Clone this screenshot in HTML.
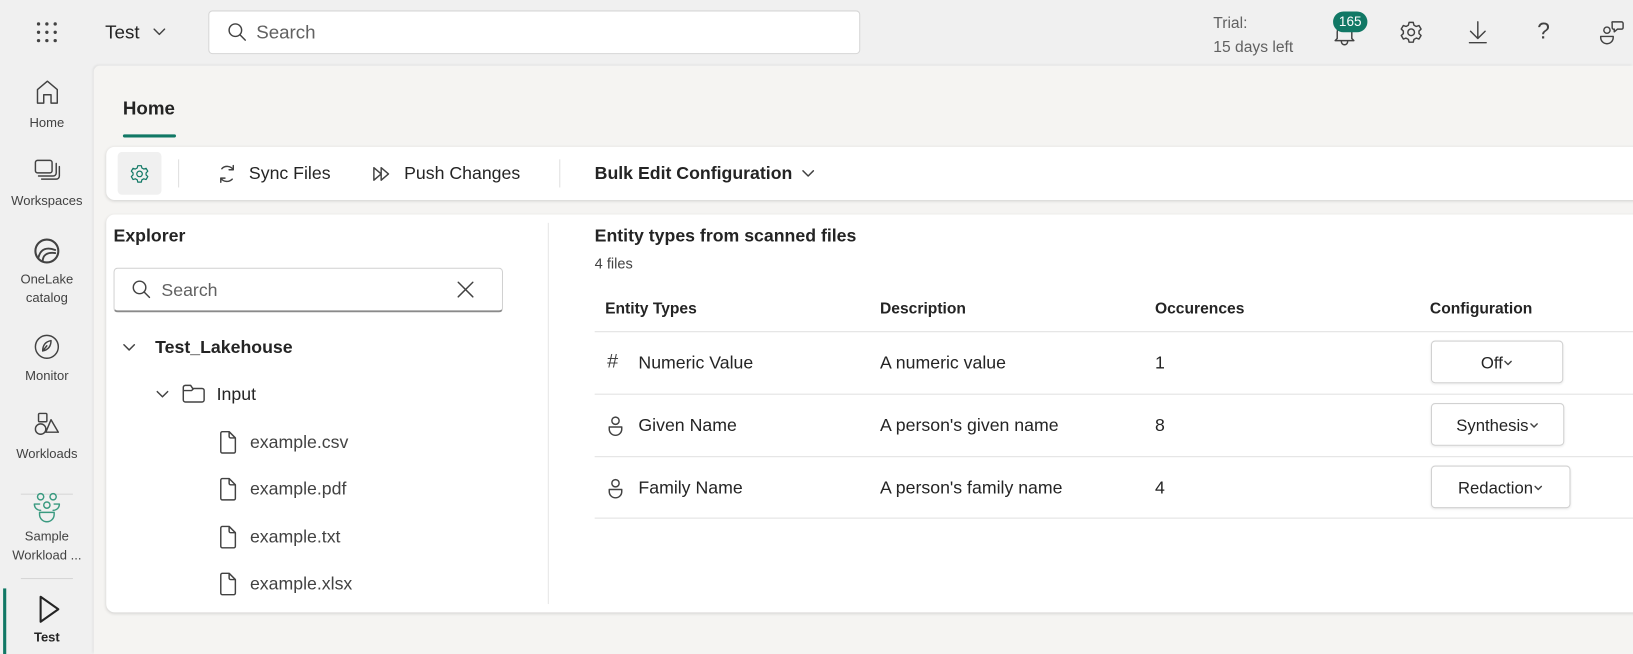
<!DOCTYPE html>
<html><head><meta charset="utf-8"><style>
*{box-sizing:border-box;margin:0;padding:0}
html,body{width:1633px;height:654px;overflow:hidden;background:#f0f0f0;font-family:"Liberation Sans",sans-serif;color:#242424}
#w{position:absolute;left:0;top:0;width:1568px;height:628px;transform:scale(1.04145);transform-origin:0 0;background:#f0f0f0}
.a{position:absolute;white-space:nowrap}
svg{position:absolute;fill:none;stroke:#424242;stroke-width:1.4;stroke-linecap:round;stroke-linejoin:round}
.nl{position:absolute;width:90px;text-align:center;font-size:12.5px;color:#424242;left:0;line-height:18px}
.b{font-weight:bold}
.hl{position:absolute;left:571px;width:997px;height:1px;background:#e1e1e1}
.btn{position:absolute;height:41px;border:1px solid #d1d1d1;border-radius:4px;background:#fff;font-size:16px;text-align:center;line-height:44px;box-shadow:0 1px 2px rgba(0,0,0,.08)}
.btn i{display:inline-block;width:10px;height:8px;position:relative;top:-1px}
.btn i svg{position:static}
</style></head><body><div id="w">
<svg style="left:34px;top:20px" width="22" height="22" viewBox="0 0 22 22"><g fill="#424242" stroke="none"><circle cx="3" cy="3" r="1.6"/><circle cx="11" cy="3" r="1.6"/><circle cx="19" cy="3" r="1.6"/><circle cx="3" cy="11" r="1.6"/><circle cx="11" cy="11" r="1.6"/><circle cx="19" cy="11" r="1.6"/><circle cx="3" cy="19" r="1.6"/><circle cx="11" cy="19" r="1.6"/><circle cx="19" cy="19" r="1.6"/></g></svg>
<div class="a" style="left:101px;top:21px;font-size:18px">Test</div>
<svg style="left:147px;top:27px" width="12" height="8" viewBox="0 0 12 8"><path d="M1 1l5 5 5-5"/></svg>
<div class="a" style="left:200px;top:10px;width:626px;height:42px;background:#fff;border:1px solid #d6d6d6;border-radius:4px"></div>
<svg style="left:218px;top:21px" width="20" height="20" viewBox="0 0 20 20"><circle cx="8" cy="8" r="6"/><path d="M12.5 12.5l5 5"/></svg>
<div class="a" style="left:246px;top:21px;font-size:18px;color:#616161">Search</div>
<div class="a" style="left:1165px;top:11px;font-size:15px;color:#616161;line-height:23px">Trial:<br>15 days left</div>
<svg style="left:1280px;top:22px" width="22" height="22" viewBox="0 0 22 22"><path d="M4 15V9a7 7 0 0114 0v6l2 2H2z M8 18a3 3 0 006 0"/></svg>
<div class="a" style="left:1280px;top:11px;width:33px;height:20px;border-radius:10px;background:#117865;color:#fff;font-size:13px;text-align:center;line-height:20px">165</div>
<svg style="left:1343px;top:19px" width="24" height="24" viewBox="0 0 24 24"><circle cx="12" cy="12" r="3.2"/><path d="M10 2.5h4l.7 2.7 2.2 1.2 2.6-.9 2 3.4-2 1.9v2.4l2 1.9-2 3.4-2.6-.9-2.2 1.2-.7 2.7h-4l-.7-2.7-2.2-1.2-2.6.9-2-3.4 2-1.9v-2.4l-2-1.9 2-3.4 2.6.9 2.2-1.2z"/></svg>
<svg style="left:1408px;top:19px" width="22" height="24" viewBox="0 0 22 24"><path d="M11 2v16M4 11l7 7 7-7M3 22h16"/></svg>
<div class="a" style="left:1476px;top:17px;font-size:22px;color:#424242">?</div>
<svg style="left:1535px;top:18px" width="26" height="26" viewBox="0 0 26 26"><circle cx="8" cy="11" r="3"/><path d="M2 17h12v1a6 6 0 01-12 0z"/><path d="M13 3h9a1.5 1.5 0 011.5 1.5v4A1.5 1.5 0 0122 10h-4l-3 2.5V10a1.5 1.5 0 01-2-1.5v-4A1.5 1.5 0 0113 3z"/></svg>
<svg style="left:33px;top:75px" width="25" height="26" viewBox="0 0 25 26"><path d="M3 11l9.5-8 9.5 8v13h-6v-8h-7v8H3z"/></svg>
<div class="nl" style="top:109px">Home</div>
<svg style="left:31px;top:151px" width="28" height="26" viewBox="0 0 28 26"><rect x="3" y="3" width="16" height="12" rx="2"/><path d="M6 18h14a3 3 0 003-3V6M9 21h14a3 3 0 003-3V9"/></svg>
<div class="nl" style="top:184px">Workspaces</div>
<svg style="left:31px;top:227px" width="28" height="28" viewBox="0 0 28 28"><circle cx="14" cy="14" r="11" stroke-width="2"/><path d="M6 20c2-8 8-10 16-7M10 24c0-6 4-9 12-8" stroke-width="1.8"/></svg>
<div class="nl" style="top:259px">OneLake<br>catalog</div>
<svg style="left:32px;top:320px" width="26" height="26" viewBox="0 0 26 26"><circle cx="13" cy="13" r="11"/><path d="M9 17c0-6 3-9 8-10 0 6-3 9-8 10zM9 17l4-5"/></svg>
<div class="nl" style="top:352px">Monitor</div>
<svg style="left:31px;top:393px" width="28" height="28" viewBox="0 0 28 28"><rect x="6" y="4" width="8" height="8" rx="1"/><circle cx="8" cy="19" r="5"/><path d="M18 10l7 12H13z"/></svg>
<div class="nl" style="top:427px">Workloads</div>
<div class="a" style="left:20px;top:474px;width:50px;height:1px;background:#d6d6d6"></div>
<svg style="left:29px;top:472px" width="32" height="30" viewBox="0 0 32 30"><g stroke="#3a9a80"><circle cx="10" cy="5" r="3"/><circle cx="22" cy="5" r="3"/><circle cx="16" cy="13" r="3"/><path d="M4 12h5M23 12h5M4 12c0 4 3 6 6 6M28 12c0 4-3 6-6 6M9 20h14v2a7 7 0 01-14 0z"/></g></svg>
<div class="nl" style="top:506px">Sample<br>Workload ...</div>
<div class="a" style="left:20px;top:555px;width:50px;height:1px;background:#d6d6d6"></div>
<svg style="left:34px;top:570px" width="26" height="30" viewBox="0 0 26 30"><path d="M5 3l17 12L5 27z" stroke="#242424" stroke-width="2"/></svg>
<div class="nl b" style="top:603px;color:#242424">Test</div>
<div class="a" style="left:3px;top:565px;width:3px;height:63px;background:#117865"></div>
<div class="a" style="left:90px;top:63px;width:1478px;height:565px;background:#f5f4f2;border-top-left-radius:6px;box-shadow:-1px -1px 2px rgba(0,0,0,.06)"></div>
<div class="a b" style="left:118px;top:94px;font-size:18px">Home</div>
<div class="a" style="left:118px;top:129px;width:51px;height:3px;border-radius:2px;background:#117865"></div>
<div class="a" style="left:102px;top:141px;width:1480px;height:51px;background:#fff;border-radius:8px;box-shadow:0 1px 3px rgba(0,0,0,.15)"></div>
<div class="a" style="left:113px;top:146px;width:42px;height:41px;background:#f0f0f0;border-radius:4px"></div>
<svg style="left:124px;top:157px;stroke:#117865" width="20" height="20" viewBox="0 0 24 24"><circle cx="12" cy="12" r="3.2"/><path d="M10 2.5h4l.7 2.7 2.2 1.2 2.6-.9 2 3.4-2 1.9v2.4l2 1.9-2 3.4-2.6-.9-2.2 1.2-.7 2.7h-4l-.7-2.7-2.2-1.2-2.6.9-2-3.4 2-1.9v-2.4l-2-1.9 2-3.4 2.6.9 2.2-1.2z"/></svg>
<div class="a" style="left:171px;top:153px;width:1px;height:27px;background:#e0e0e0"></div>
<svg style="left:208px;top:156px" width="20" height="22" viewBox="0 0 20 22"><path d="M5 6a7 7 0 0111 1M15 16a7 7 0 01-11-1M16 3v4h-4M4 19v-4h4"/></svg>
<div class="a" style="left:239px;top:157px;font-size:17px">Sync Files</div>
<svg style="left:357px;top:158px" width="20" height="18" viewBox="0 0 20 18"><path d="M2 3l7 6-7 6zM9 3l7 6-7 6z"/></svg>
<div class="a" style="left:388px;top:157px;font-size:17px">Push Changes</div>
<div class="a" style="left:537px;top:153px;width:1px;height:27px;background:#e0e0e0"></div>
<div class="a b" style="left:571px;top:157px;font-size:17px">Bulk Edit Configuration</div>
<svg style="left:770px;top:163px" width="12" height="8" viewBox="0 0 12 8"><path d="M1 1l5 5 5-5"/></svg>
<div class="a" style="left:102px;top:206px;width:1480px;height:382px;background:#fff;border-radius:8px;box-shadow:0 1px 3px rgba(0,0,0,.15)"></div>
<div class="a" style="left:526px;top:214px;width:1px;height:366px;background:#e6e6e6"></div>
<div class="a b" style="left:109px;top:217px;font-size:17px">Explorer</div>
<div class="a" style="left:109px;top:257px;width:374px;height:43px;border:1px solid #d1d1d1;border-bottom:2px solid #8a8a8a;border-radius:4px"></div>
<svg style="left:126px;top:268px" width="20" height="20" viewBox="0 0 20 20"><circle cx="8" cy="8" r="6"/><path d="M12.5 12.5l5 5"/></svg>
<div class="a" style="left:155px;top:269px;font-size:17px;color:#616161">Search</div>
<svg style="left:438px;top:269px" width="18" height="18" viewBox="0 0 18 18"><path d="M2 2l14 14M16 2L2 16"/></svg>
<svg style="left:118px;top:330px" width="12" height="8" viewBox="0 0 12 8"><path d="M1 1l5 5 5-5"/></svg>
<div class="a b" style="left:149px;top:324px;font-size:17px">Test_Lakehouse</div>
<svg style="left:150px;top:375px" width="12" height="8" viewBox="0 0 12 8"><path d="M1 1l5 5 5-5"/></svg>
<svg style="left:174px;top:368px" width="24" height="20" viewBox="0 0 24 20"><path d="M2 4a2 2 0 012-2h5l2 3h9a2 2 0 012 2v9a2 2 0 01-2 2H4a2 2 0 01-2-2zM2 7h8l2-2"/></svg>
<div class="a" style="left:208px;top:369px;font-size:17px">Input</div>
<svg style="left:209px;top:413px" width="20" height="24" viewBox="0 0 20 24"><path d="M3 3a1.5 1.5 0 011.5-1.5H11l6 6v13a1.5 1.5 0 01-1.5 1.5h-11A1.5 1.5 0 013 20.5zM11 1.5V6a1.5 1.5 0 001.5 1.5H17"/></svg>
<div class="a" style="left:240px;top:415px;font-size:17px;color:#424242">example.csv</div>
<svg style="left:209px;top:458px" width="20" height="24" viewBox="0 0 20 24"><path d="M3 3a1.5 1.5 0 011.5-1.5H11l6 6v13a1.5 1.5 0 01-1.5 1.5h-11A1.5 1.5 0 013 20.5zM11 1.5V6a1.5 1.5 0 001.5 1.5H17"/></svg>
<div class="a" style="left:240px;top:460px;font-size:17px;color:#424242">example.pdf</div>
<svg style="left:209px;top:504px" width="20" height="24" viewBox="0 0 20 24"><path d="M3 3a1.5 1.5 0 011.5-1.5H11l6 6v13a1.5 1.5 0 01-1.5 1.5h-11A1.5 1.5 0 013 20.5zM11 1.5V6a1.5 1.5 0 001.5 1.5H17"/></svg>
<div class="a" style="left:240px;top:506px;font-size:17px;color:#424242">example.txt</div>
<svg style="left:209px;top:549px" width="20" height="24" viewBox="0 0 20 24"><path d="M3 3a1.5 1.5 0 011.5-1.5H11l6 6v13a1.5 1.5 0 01-1.5 1.5h-11A1.5 1.5 0 013 20.5zM11 1.5V6a1.5 1.5 0 001.5 1.5H17"/></svg>
<div class="a" style="left:240px;top:551px;font-size:17px;color:#424242">example.xlsx</div>
<div class="a b" style="left:571px;top:217px;font-size:17px">Entity types from scanned files</div>
<div class="a" style="left:571px;top:245px;font-size:14px;color:#424242">4 files</div>
<div class="a b" style="left:581px;top:288px;font-size:15px">Entity Types</div>
<div class="a b" style="left:845px;top:288px;font-size:15px">Description</div>
<div class="a b" style="left:1109px;top:288px;font-size:15px">Occurences</div>
<div class="a b" style="left:1373px;top:288px;font-size:15px">Configuration</div>
<div class="hl" style="top:318px"></div><div class="hl" style="top:378px"></div><div class="hl" style="top:438px"></div><div class="hl" style="top:497px"></div>
<div class="a" style="left:583px;top:337px;font-size:19px;color:#424242">#</div>
<div class="a" style="left:613px;top:339px;font-size:17px">Numeric Value</div>
<div class="a" style="left:845px;top:339px;font-size:17px">A numeric value</div>
<div class="a" style="left:1109px;top:339px;font-size:17px">1</div>
<div class="btn" style="left:1374px;top:327px;width:127px">Off<i><svg width="10" height="8" viewBox="0 0 10 8"><path d="M2 2l3 3 3-3"/></svg></i></div>
<svg style="left:583px;top:399px" width="16" height="20" viewBox="0 0 16 20"><circle cx="8" cy="5" r="3.5"/><path d="M2 11h12v2a6 6 0 01-12 0z"/></svg>
<div class="a" style="left:613px;top:399px;font-size:17px">Given Name</div>
<div class="a" style="left:845px;top:399px;font-size:17px">A person's given name</div>
<div class="a" style="left:1109px;top:399px;font-size:17px">8</div>
<div class="btn" style="left:1374px;top:387px;width:128px">Synthesis<i><svg width="10" height="8" viewBox="0 0 10 8"><path d="M2 2l3 3 3-3"/></svg></i></div>
<svg style="left:583px;top:459px" width="16" height="20" viewBox="0 0 16 20"><circle cx="8" cy="5" r="3.5"/><path d="M2 11h12v2a6 6 0 01-12 0z"/></svg>
<div class="a" style="left:613px;top:459px;font-size:17px">Family Name</div>
<div class="a" style="left:845px;top:459px;font-size:17px">A person's family name</div>
<div class="a" style="left:1109px;top:459px;font-size:17px">4</div>
<div class="btn" style="left:1374px;top:447px;width:134px">Redaction<i><svg width="10" height="8" viewBox="0 0 10 8"><path d="M2 2l3 3 3-3"/></svg></i></div>
</div></body></html>
